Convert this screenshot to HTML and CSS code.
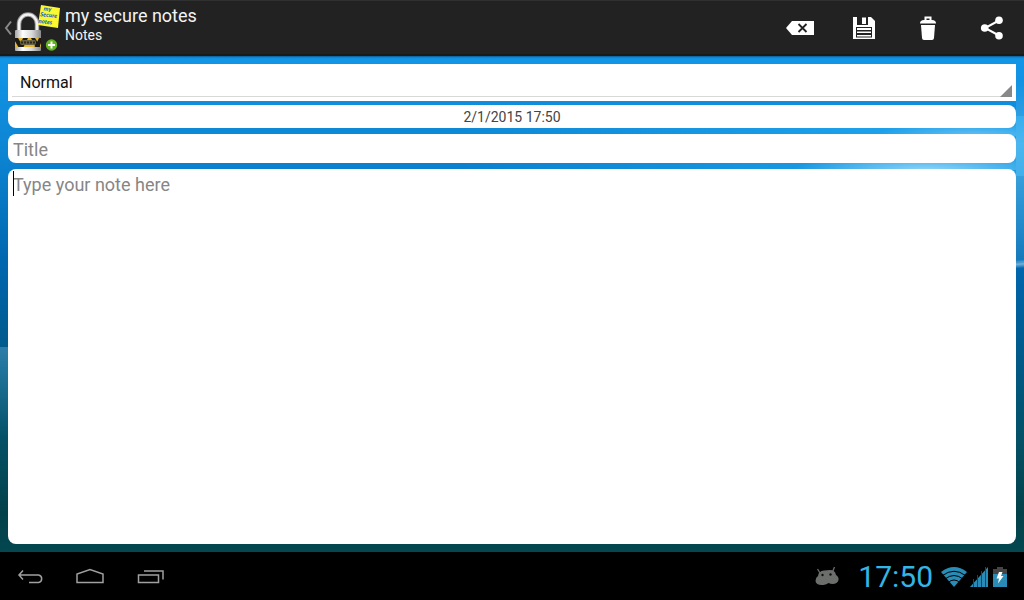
FILE: index.html
```html
<!DOCTYPE html>
<html lang="en">
<head>
    <meta charset="UTF-8">
    <meta name="viewport" content="width=device-width, initial-scale=1.0">
    <title>my secure notes</title>
    <link rel="stylesheet" href="styles.css">
</head>
<body>
    <header class="action-bar">
        <a class="home-link" href="#">
            <svg class="up-icon" width="8" height="16" viewBox="0 0 8 16"><path d="M7 1.500 L2 8 L7 14.500" fill="none" stroke="#8a8a8a" stroke-width="2"/></svg>
            <svg class="app-icon" width="48" height="48" viewBox="0 0 48 48">
                <defs>
                    <linearGradient id="steel" x1="0" x2="1" y1="0" y2="0">
                        <stop offset="0" stop-color="#a5a5a5"/>
                        <stop offset=".3" stop-color="#fff"/>
                        <stop offset=".65" stop-color="#d8d8d8"/>
                        <stop offset="1" stop-color="#8a8a8a"/>
                    </linearGradient>
                    <clipPath id="band"><rect x="3" y="34" width="26" height="9"/></clipPath>
                </defs>
                <path d="M7 28V20a9 9.500 0 0 1 18 0v8" fill="none" stroke="#999" stroke-width="4.500"/>
                <path d="M7 28V20a9 9.500 0 0 1 18 0v8" fill="none" stroke="#f2f2f2" stroke-width="2.500"/>
                <rect x="3" y="26" width="26" height="21" rx="1" fill="url(#steel)"/>
                <g clip-path="url(#band)">
                    <rect x="3" y="34" width="26" height="10" fill="#e3b530"/>
                    <path d="M1 34h5l6 10H7zM11 34h5l-5 10H7zM19 34h4l6 10h-5zM27 34h4l-4 10h-5z" fill="#1c1a14"/>
                    <rect x="8" y="36" width="16" height="5" rx="2" fill="#6b6345"/>
                    <path d="M9 38.500h14" stroke="#2b281c" stroke-width="2" stroke-dasharray="2 1"/>
                </g>
                <path d="M29 1l19 3-2 20-20-3z" fill="#fbf832"/>
                <g transform="rotate(6 36 12)" fill="#1565c8" font-family="Lato, sans-serif" font-weight="900" font-style="italic" font-size="6">
                    <text x="31" y="7">my</text>
                    <text x="28" y="13">Secure</text>
                    <text x="27" y="20">notes</text>
                </g>
                <circle cx="39.500" cy="41" r="5.700" fill="#62b51e"/>
                <path d="M39.500 37.500v7M36 41h7" stroke="#fff" stroke-width="2"/>
            </svg>
            <span class="titles">
                <span class="app-title">my secure notes</span>
                <span class="app-subtitle">Notes</span>
            </span>
        </a>
        <div class="actions">
            <button type="button" class="action" aria-label="Clear">
                <svg width="32" height="32" viewBox="0 0 32 32"><path d="M2 16l6-7h22v14H8z" fill="#fff"/><path d="M14.500 12l8 8M22.500 12l-8 8" stroke="#222" stroke-width="1.800"/></svg>
            </button>
            <button type="button" class="action" aria-label="Save">
                <svg width="32" height="32" viewBox="0 0 32 32"><path d="M5 5h18l4 4v18H5z" fill="#fff"/><path d="M9 4h11v9H9z" fill="#222"/><path d="M14 5.500h4v6.500h-4z" fill="#fff"/><path d="M8 15h16v10.500H8z" fill="#222"/><path d="M9 16h14v2H9zM9 19.500h14v1.500H9zM9 23h14v1.500H9z" fill="#fff"/></svg>
            </button>
            <button type="button" class="action" aria-label="Delete">
                <svg width="32" height="32" viewBox="0 0 32 32"><path d="M13.500 8V5.500h5V8" fill="none" stroke="#fff" stroke-width="2"/><path d="M8 11.500q0-3.500 4-3.500h8q4 0 4 3.500z" fill="#fff"/><path d="M9 13h14l-1 13q-.2 2-2 2h-8q-1.800 0-2-2z" fill="#fff"/></svg>
            </button>
            <button type="button" class="action" aria-label="Share">
                <svg width="32" height="32" viewBox="0 0 32 32"><path d="M23 8.500L9 16l14 7.500" fill="none" stroke="#fff" stroke-width="2"/><circle cx="8.700" cy="16" r="3.800" fill="#fff"/><circle cx="23" cy="8.300" r="3.800" fill="#fff"/><circle cx="23" cy="23.700" r="3.800" fill="#fff"/></svg>
            </button>
        </div>
    </header>

    <main class="wallpaper">
        <form class="note-form">
            <div class="spinner">
                <select class="spinner-select" aria-label="Note type">
                    <option>Normal</option>
                </select>
            </div>
            <div class="date">2/1/2015 17:50</div>
            <input class="field" type="text" placeholder="Title" aria-label="Title">
            <div class="note">
                <textarea class="note-text" placeholder="Type your note here" aria-label="Note"></textarea>
                <span class="caret"></span>
            </div>
        </form>
    </main>

    <footer class="system-bar">
        <div class="nav-keys">
            <button type="button" class="nav-key" aria-label="Back">
                <svg width="32" height="32" viewBox="0 0 32 32"><path d="M9 10.500l-4 4.500 4 4.500M5 15h19.500a3.800 3.800 0 0 1 0 7.500H15" fill="none" stroke="#a0a0a0" stroke-width="1.500"/></svg>
            </button>
            <button type="button" class="nav-key" aria-label="Home">
                <svg width="32" height="32" viewBox="0 0 32 32"><path d="M3 22.500V14L16 9.500 29 14v8.500z" fill="none" stroke="#a0a0a0" stroke-width="1.500"/></svg>
            </button>
            <button type="button" class="nav-key" aria-label="Recent apps">
                <svg width="32" height="32" viewBox="0 0 32 32"><path d="M4.500 15h20v7.500h-20zM10 11h19v8.500" fill="none" stroke="#a0a0a0" stroke-width="1.500"/></svg>
            </button>
        </div>
        <div class="status">
            <svg class="debug-icon" width="24" height="20" viewBox="0 0 24 20"><path d="M2.500 2l2.500 4M19.500 0l-2 5" stroke="#6c6e6b" stroke-width="1.300"/><path d="M3 9Q3.500 4 9 3.500L15 3q5 0 6 5 3 2 2.500 5-1 4-6 4-2 0-4-1-2 1.800-5 1.900Q1 18.500 .5 14 .5 10.500 3 9z" fill="#6c6e6b"/><circle cx="7.500" cy="8" r="1.200" fill="#111"/><circle cx="15.500" cy="7.500" r="1.200" fill="#111"/></svg>
            <span class="clock">17:50</span>
            <svg width="26" height="20" viewBox="0 0 26 20"><path d="M0 5q13-10 26 0L13 20z" fill="#288cb6"/><path d="M1.500 8.500q11.500-8.500 23 0M4 12q9-7 18 0M7 15.500q6-5 12 0" fill="none" stroke="#000" stroke-width="1"/></svg>
            <svg width="20" height="20" viewBox="0 0 20 20"><path d="M0 20L18 0v20z" fill="#288cb6"/><path d="M3.500 12v8M7.500 8v12M11.500 4v16M15.500 0v20" stroke="#0a4a64" stroke-width="1"/></svg>
            <svg width="14" height="20" viewBox="0 0 14 20"><path d="M4 0h6v2h4v5H0V2h4z" fill="#444"/><path d="M0 7h14v13H0z" fill="#288cb6"/><path d="M6 5L3.500 11.500H6l-1 5 5.500-7.500H8l1.500-4z" fill="#fff"/></svg>
        </div>
    </footer>
</body>
</html>
```
FILE: styles.css
```css
* {
    box-sizing: border-box;
}
body {
    margin: 0;
    min-height: 100vh;
    display: flex;
    flex-direction: column;
    font-family: Roboto, sans-serif;
    background-color: #000;
}
svg {
    display: block;
}
button {
    padding: 0;
    border: none;
    background: none;
    cursor: pointer;
}
.action-bar {
    height: 56px;
    display: flex;
    justify-content: space-between;
    background-color: #222;
    border-top: 1px solid #303030;
    border-bottom: 2px solid #1a1a1a;
}
.home-link {
    display: flex;
    align-items: center;
    padding-left: 4px;
    color: #f3f3f3;
    text-decoration: none;
}
.titles {
    display: flex;
    flex-direction: column;
    padding: 0 0 6px 5px;
}
.app-title {
    font-size: 18px;
    line-height: 20px;
}
.app-subtitle {
    font-size: 14px;
    line-height: 18px;
}
.actions {
    display: flex;
}
.action {
    width: 64px;
    display: flex;
    align-items: center;
    justify-content: center;
}
.wallpaper {
    flex: 1;
    display: flex;
    padding: 8px;
    background:
        linear-gradient(176deg, transparent 20%, rgba(190, 230, 250, 0.6) 60%, transparent) right 202px / 8px 10px no-repeat,
        radial-gradient(ellipse at 60% 100%, rgba(190, 235, 255, 0.7), transparent 70%) right 8px top 96px / 222px 18px no-repeat,
        radial-gradient(ellipse at 70% 100%, rgba(150, 215, 250, 0.6), transparent 70%) right 8px top 66px / 142px 14px no-repeat,
        linear-gradient(rgba(120, 200, 240, 0), rgba(120, 205, 245, 0.5) 35%, rgba(100, 190, 230, 0.2)) right 24px / 8px 182px no-repeat,
        linear-gradient(rgba(110, 180, 210, 0.4), transparent) left 291px / 8px 90px no-repeat,
        linear-gradient(90deg, transparent 45%, rgba(40, 175, 245, 0.6) 85%) left 60px / 100% 60px no-repeat,
        linear-gradient(#1396e8, #0c84d2 20%, #0066ae 42%, #005a8a 60%, #045064 78%, #03414a 92%, #034750);
    box-shadow: inset 0 3px 2px -2px rgba(0, 0, 0, 0.4);
}
.note-form {
    flex: 1;
    display: flex;
    flex-direction: column;
    gap: 6px;
}
.spinner {
    position: relative;
    height: 37px;
    padding: 0 4px 4px;
    margin-bottom: -2px;
    background-color: #fff;
}
.spinner::after {
    content: "";
    position: absolute;
    right: 4px;
    bottom: 4px;
    border-left: 12px solid transparent;
    border-bottom: 12px solid #888;
    pointer-events: none;
}
.spinner-select {
    appearance: none;
    width: 100%;
    height: 33px;
    padding: 4px 8px 0;
    border: none;
    border-bottom: 1px solid #d8d8d8;
    background-color: #fff;
    color: #111;
    font: 16px Roboto, sans-serif;
    outline: none;
}
.date {
    height: 23px;
    border-radius: 8px;
    background-color: #fff;
    color: #444;
    font-size: 14px;
    line-height: 24px;
    text-align: center;
}
.field {
    width: 100%;
    height: 29px;
    padding: 2px 5px 0;
    border: none;
    border-radius: 8px;
    background-color: #fff;
    font: 18px Roboto, sans-serif;
    outline: none;
}
.note {
    position: relative;
    flex: 1;
    display: flex;
}
.note-text {
    flex: 1;
    padding: 5px;
    border: none;
    border-radius: 8px;
    background-color: #fff;
    font: 18px/22px Roboto, sans-serif;
    resize: none;
    outline: none;
}
.field::placeholder,
.note-text::placeholder {
    color: #868686;
}
.caret {
    position: absolute;
    left: 5px;
    top: 2px;
    width: 1px;
    height: 25px;
    background-color: #000;
}
.system-bar {
    height: 48px;
    display: flex;
    align-items: center;
    justify-content: space-between;
    padding-right: 17px;
    background-color: #000;
}
.nav-keys {
    display: flex;
}
.nav-key {
    width: 60px;
    height: 48px;
    display: flex;
    align-items: center;
    justify-content: center;
}
.status {
    display: flex;
    align-items: center;
    gap: 3px;
    padding-top: 2px;
}
.debug-icon {
    margin-right: 16px;
}
.clock {
    margin-right: 5px;
    color: #33b5e5;
    font-size: 30px;
    line-height: 36px;
}
```
